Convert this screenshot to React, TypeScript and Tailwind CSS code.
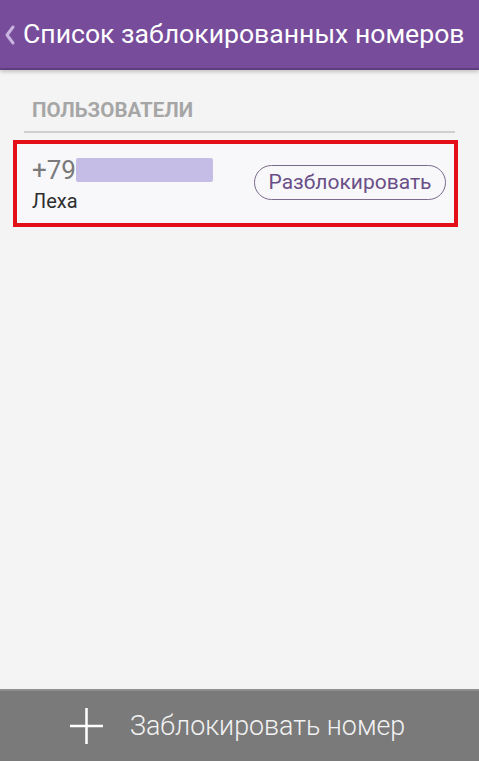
import React from "react";

export default function App() {
  return (
    <div className="flex h-[761px] w-[479px] flex-col overflow-hidden bg-[#f4f4f4] font-['Roboto',sans-serif]">
      <header className="flex h-[70px] shrink-0 items-center border-b-2 border-[#5f3d80] bg-[#764c9b] pl-[4px] shadow-[0_2px_4px_rgba(0,0,0,0.2)]">
        <svg width="12" height="22" viewBox="0 0 12 22" className="mr-[7px] mt-[1px]">
          <path d="M9 3 L3 11 L9 19" fill="none" stroke="#c9b3e0" strokeWidth="3" strokeLinecap="round" strokeLinejoin="round" />
        </svg>
        <div className="whitespace-nowrap text-[26.6px] leading-none text-white">Список заблокированных номеров</div>
      </header>

      <main className="flex-1 pt-[28px]">
        <div className="mx-[24px] border-b-2 border-[#cfcfcf] pb-[8px] pl-[8px] text-[20.5px] font-bold leading-[25px] text-[#a6a6a6]">
          ПОЛЬЗОВАТЕЛИ
        </div>

        <div className="ml-[13px] mr-[21px] mt-[7px] flex h-[87px] items-center border-[4px] border-[#e3101a] bg-[#f8f8fa] pl-[15px] pr-[8px]">
          <div className="flex flex-1 flex-col">
            <div className="flex items-center">
              <span className="text-[26px] leading-[30px] text-[#7a7a7a]">+79</span>
              <span className="h-[24px] w-[137px] rounded-[2px] bg-[#c5bde5]" />
            </div>
            <div className="mt-[5px] text-[20px] leading-[22px] text-[#2e2e2e]">Леха</div>
          </div>
          <button className="mt-[-3px] flex h-[35px] w-[192px] items-center justify-center rounded-full border-[1.5px] border-[#7b6c8c] text-[21px] leading-none text-[#6a4f88]">
            Разблокировать
          </button>
        </div>
      </main>

      <footer className="flex h-[72px] shrink-0 items-center border-t-2 border-[#8e8e8e] bg-[#7a7a7a] pl-[69px]">
        <svg width="35" height="38" viewBox="0 0 35 38">
          <path d="M17.5 1 V37 M1 19 H34" stroke="#ffffff" strokeWidth="2.5" />
        </svg>
        <span className="ml-[26px] text-[26.8px] font-light leading-none text-[#f2f2f2]">Заблокировать номер</span>
      </footer>
    </div>
  );
}
